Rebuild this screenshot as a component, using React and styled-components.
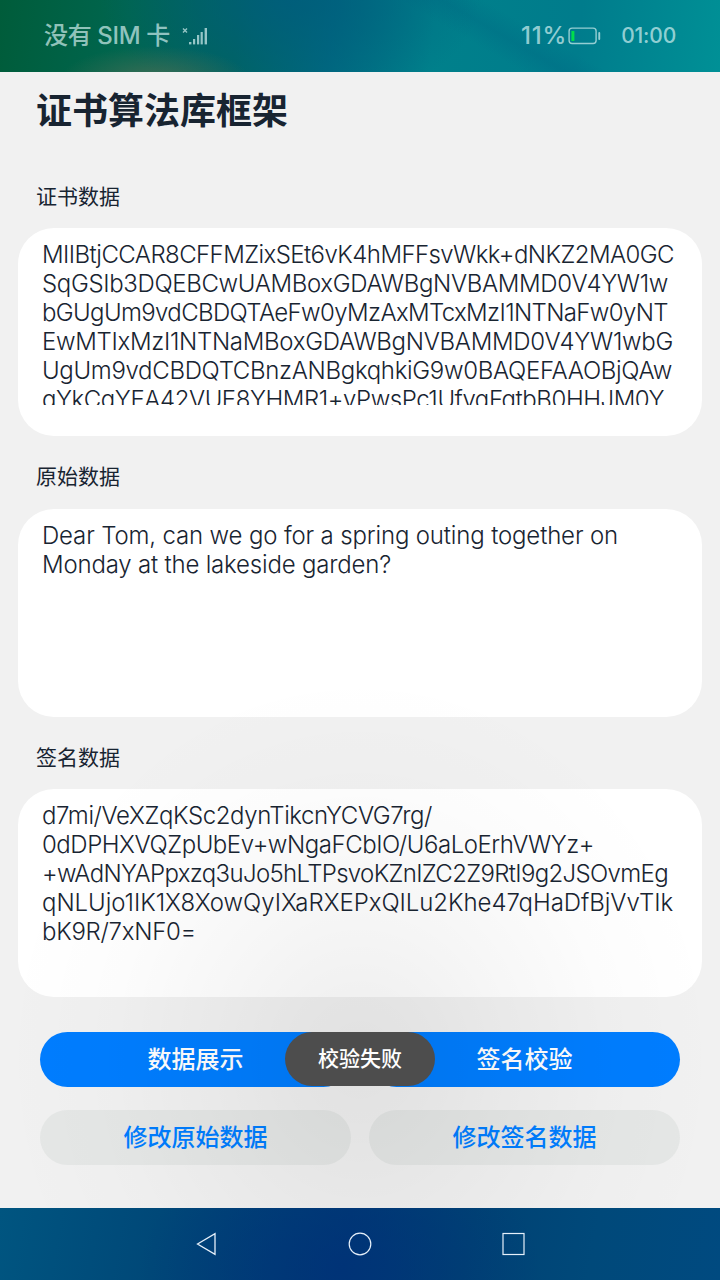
import React, { useLayoutEffect, useRef, useState } from "react";
import styled, { createGlobalStyle } from "styled-components";

const GlobalStyle = createGlobalStyle`
  * { box-sizing: border-box; }
  body {
    margin: 0;
    font-family: Inter, "Noto Sans CJK SC", sans-serif;
    color: #182431;
  }
`;

const Screen = styled.div`
  width: 720px;
  height: 1280px;
  display: flex;
  flex-direction: column;
  overflow: hidden;
`;

const StatusBar = styled.header`
  height: 72px;
  flex: none;
  display: flex;
  align-items: center;
  justify-content: space-between;
  padding: 0 44px;
  color: rgba(220, 245, 245, 0.68);
  background:
    radial-gradient(ellipse 95px 34px at 155px 80px, rgba(76, 110, 84, 0.8), transparent),
    radial-gradient(ellipse 190px 110px at 290px 0, rgba(0, 92, 125, 0.8), transparent),
    linear-gradient(30deg, transparent 62%, rgba(0, 100, 130, 0.3) 67%, transparent 72%),
    linear-gradient(97deg, #005c3a 0%, #00664f 18%, #00655f 33%, #006a80 46%, #00808b 60%, #007c8c 80%, #009096 100%);
`;

const StatusGroup = styled.div`
  display: flex;
  align-items: center;
`;

const StatusText = styled.span`
  font-size: ${(p) => p.$size}px;
  line-height: 30px;
  font-weight: 500;
  letter-spacing: ${(p) => p.$spacing || 0}px;
  white-space: nowrap;
`;

const SignalIcon = styled.svg`
  margin-left: 12px;
`;

const BatteryIcon = styled.svg`
  margin: 0 20px 0 1px;
`;

const Page = styled.main`
  position: relative;
  flex: 1;
  background: #f1f1f1;
  display: flex;
  flex-direction: column;
`;

const Title = styled.h1`
  margin: 0;
  height: 83.5px;
  padding: 10px 36px 0;
  font-size: 36px;
  line-height: 52px;
  font-weight: 700;
  font-family: "Noto Sans CJK SC", sans-serif;
`;

const Label = styled.h2`
  margin: 0;
  height: 72.5px;
  padding: 24px 36px 0;
  font-size: 21px;
  line-height: 30px;
  font-weight: 400;
  font-family: "Noto Sans CJK SC", sans-serif;
`;

const Card = styled.section`
  height: 208px;
  margin: 0 18px;
  padding: 12px 24px 31px;
  border-radius: 36px;
  background: #fff;
`;

const CardText = styled.div`
  height: 100%;
  overflow: hidden;
`;

const Line = styled.div`
  height: 29px;
  line-height: 29px;
  font-size: 24px;
  font-weight: 350;
  white-space: nowrap;
`;

const Buttons = styled.div`
  display: grid;
  grid-template-columns: 1fr 1fr;
  gap: 23.5px 18px;
  padding: 35px 40px 0;
`;

const Button = styled.button`
  height: 54.5px;
  border: 0;
  border-radius: 28px;
  padding: 0 0 2px;
  font: 500 24px/52px "Noto Sans CJK SC", sans-serif;
  color: ${(p) => (p.$primary ? "#fff" : "#007dff")};
  background: ${(p) => (p.$primary ? "#007dff" : "#e5e7e6")};
`;

const ToastShadow = styled.div`
  position: absolute;
  inset: 0;
  pointer-events: none;
  background: radial-gradient(
    ellipse 360px 390px at 360px 988px,
    rgba(0, 0, 0, 0.065) 0%,
    rgba(0, 0, 0, 0.054) 18%,
    rgba(0, 0, 0, 0.034) 40%,
    rgba(0, 0, 0, 0.013) 70%,
    transparent 100%
  );
`;

const Toast = styled.div`
  position: absolute;
  left: 285px;
  top: 960px;
  width: 150px;
  height: 54px;
  border-radius: 27px;
  background: #4d4d4d;
  color: #fff;
  text-align: center;
  font: 500 21px/51px "Noto Sans CJK SC", sans-serif;
`;

const NavBar = styled.nav`
  height: 72px;
  flex: none;
  display: flex;
  align-items: center;
  justify-content: center;
  gap: 129px;
  background:
    radial-gradient(ellipse 200px 130px at 340px 60px, rgba(0, 48, 120, 0.7), transparent),
    linear-gradient(100deg, #005580 0%, #004878 22%, #003a75 48%, #004274 65%, #00497a 82%, #004a80 100%);
`;

const certificate = [
  ["MIIBtjCCAR8CFFMZixSEt6vK4hMFFsvWkk+dNKZ2MA0GC", 632],
  ["SqGSIb3DQEBCwUAMBoxGDAWBgNVBAMMD0V4YW1w", 626],
  ["bGUgUm9vdCBDQTAeFw0yMzAxMTcxMzI1NTNaFw0yNT", 626],
  ["EwMTIxMzI1NTNaMBoxGDAWBgNVBAMMD0V4YW1wbG", 631],
  ["UgUm9vdCBDQTCBnzANBgkqhkiG9w0BAQEFAAOBjQAw", 630],
  ["gYkCgYEA42VUE8YHMR1+yPwsPc1UfyqFqtbB0HHJM0Y", 622],
];

const original = [
  ["Dear Tom, can we go for a spring outing together on", 576],
  ["Monday at the lakeside garden?", 349],
];

const signature = [
  ["d7mi/VeXZqKSc2dynTikcnYCVG7rg/", 390],
  ["0dDPHXVQZpUbEv+wNgaFCbIO/U6aLoErhVWYz+", 552],
  ["+wAdNYAPpxzq3uJo5hLTPsvoKZnIZC2Z9RtI9g2JSOvmEg", 626],
  ["qNLUjo1IK1X8XowQyIXaRXEPxQILu2Khe47qHaDfBjVvTIk", 631],
  ["bK9R/7xNF0=", 154],
];

// Spreads a line's letters so that it takes exactly the given width.
function FittedLine({ text, width }) {
  const ref = useRef(null);
  const [spacing, setSpacing] = useState(0);
  useLayoutEffect(() => {
    const natural = ref.current.getBoundingClientRect().width;
    setSpacing((width - natural) / text.length);
  }, [text, width]);
  return (
    <Line>
      <span ref={ref} style={{ letterSpacing: spacing }}>{text}</span>
    </Line>
  );
}

function DataField({ label, lines }) {
  return (
    <>
      <Label>{label}</Label>
      <Card>
        <CardText>
          {lines.map(([text, width]) => (
            <FittedLine key={text} text={text} width={width} />
          ))}
        </CardText>
      </Card>
    </>
  );
}

export default function App() {
  return (
    <>
      <GlobalStyle />
      <Screen>
        <StatusBar>
          <StatusGroup>
            <StatusText $size={24} $spacing={-0.35}>没有 SIM 卡</StatusText>
            <SignalIcon width="28" height="20" viewBox="0 0 28 20" fill="currentColor">
              <path d="M1 2.5l4 4M5 2.5l-4 4" stroke="currentColor" strokeWidth="1.4" />
              <rect x="7" y="16" width="2.4" height="2.4" />
              <rect x="11" y="13" width="2.2" height="5.4" />
              <rect x="15" y="9" width="2.2" height="9.4" />
              <rect x="18.6" y="6" width="2.2" height="12.4" />
              <rect x="22.6" y="2" width="2.4" height="16.4" />
            </SignalIcon>
          </StatusGroup>
          <StatusGroup>
            <StatusText $size={24} $spacing={0.8}>11%</StatusText>
            <BatteryIcon width="33" height="18" viewBox="0 0 33 18" fill="none">
              <rect x="1.1" y="1.1" width="27" height="15.4" rx="3" stroke="currentColor" strokeWidth="1.4" />
              <rect x="3.4" y="4" width="3" height="10" rx="0.6" fill="#00dd4b" />
              <rect x="30.3" y="5" width="1.9" height="8" rx="0.9" fill="currentColor" />
            </BatteryIcon>
            <StatusText $size={21} $spacing={-0.2}>01:00</StatusText>
          </StatusGroup>
        </StatusBar>
        <Page>
          <Title>证书算法库框架</Title>
          <DataField label="证书数据" lines={certificate} />
          <DataField label="原始数据" lines={original} />
          <DataField label="签名数据" lines={signature} />
          <Buttons>
            <Button $primary>数据展示</Button>
            <Button $primary>签名校验</Button>
            <Button>修改原始数据</Button>
            <Button>修改签名数据</Button>
          </Buttons>
          <ToastShadow />
          <Toast>校验失败</Toast>
        </Page>
        <NavBar>
          <svg width="24" height="24" viewBox="0 0 24 24" fill="none" stroke="#e6f0fa" strokeWidth="1.3">
            <path d="M2.5 12L20 1.6V22.4Z" />
          </svg>
          <svg width="24" height="24" viewBox="0 0 24 24" fill="none" stroke="#e6f0fa" strokeWidth="1.2">
            <circle cx="12" cy="12" r="10.8" />
          </svg>
          <svg width="24" height="24" viewBox="0 0 24 24" fill="none" stroke="#e6f0fa" strokeWidth="1.2">
            <rect x="2" y="1.5" width="21" height="21" />
          </svg>
        </NavBar>
      </Screen>
    </>
  );
}
